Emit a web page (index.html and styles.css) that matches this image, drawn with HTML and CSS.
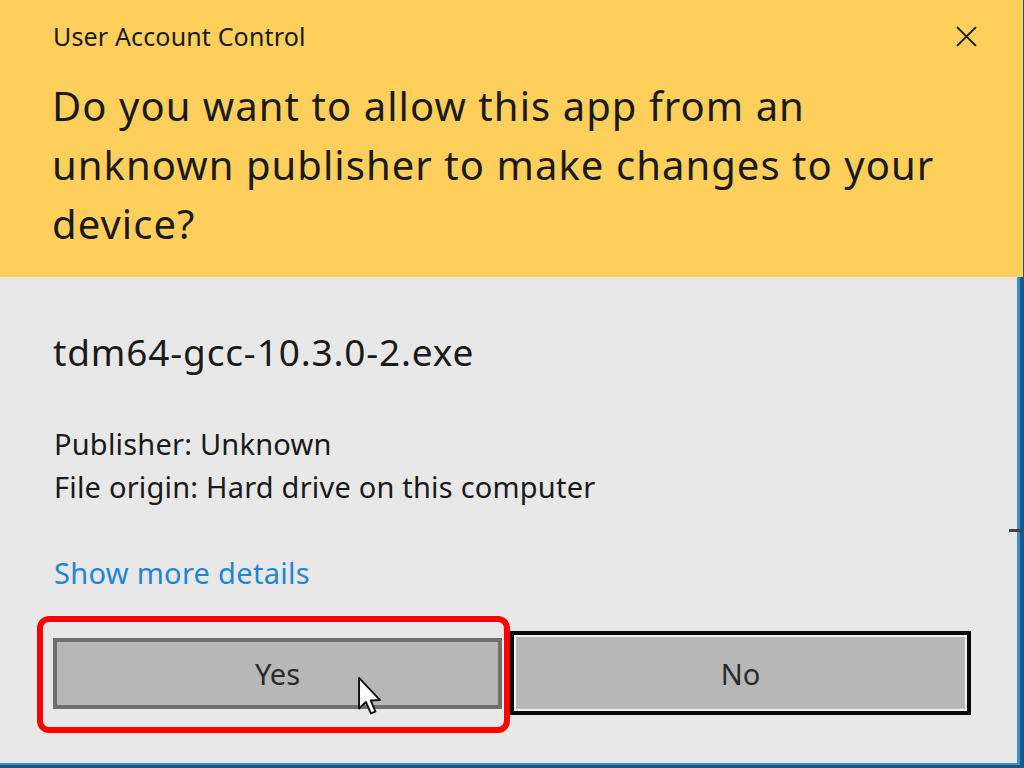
FILE: index.html
```html
<!DOCTYPE html>
<html lang="en">
<head>
<meta charset="utf-8">
<title>User Account Control</title>
<link rel="stylesheet" href="styles.css">
</head>
<body>
<div class="window">
  <header class="banner">
    <div class="titlebar">
      <span class="title">User Account Control</span>
      <svg class="close" viewBox="0 0 20 20" width="21" height="21" aria-hidden="true">
        <path d="M1 1 L19 19 M19 1 L1 19" stroke="#1a1a1a" stroke-width="1.8" fill="none"/>
      </svg>
    </div>
    <h1 class="question">Do you want to allow this app from an unknown publisher to make changes to your device?</h1>
  </header>
  <main class="content">
    <div class="filename">tdm64-gcc-10.3.0-2.exe</div>
    <div class="meta">
      <div>Publisher: Unknown</div>
      <div>File origin: Hard drive on this computer</div>
    </div>
    <a class="details" href="#">Show more details</a>
    <div class="buttons">
      <button class="btn btn-yes">Yes</button>
      <button class="btn btn-no">No</button>
      <div class="highlight"></div>
      <svg class="cursor" viewBox="0 0 14 22" width="27" height="42" aria-hidden="true">
        <path d="M1 1 L1 17 L4.6 13.6 L7.2 19.6 L9.6 18.6 L7.1 12.8 L12 12.6 Z" fill="#ffffff" stroke="#111" stroke-width="1" stroke-linejoin="round"/>
      </svg>
    </div>
    <div class="edge-mark"></div>
  </main>
</div>
</body>
</html>
```
FILE: styles.css
```css
* { box-sizing: border-box; }
html, body { margin: 0; padding: 0; }
body {
  width: 1024px;
  height: 768px;
  overflow: hidden;
  font-family: "Noto Sans", "Open Sans", "DejaVu Sans", sans-serif;
  color: #1a1a1a;
}
.window {
  width: 1024px;
  height: 768px;
  display: flex;
  flex-direction: column;
  background: #e8e8e8;
  border-right: 4px solid #17588c;
  border-bottom: 3px solid #17588c;
  box-shadow: inset -3px -2px 0 #3a8fd2;
  position: relative;
}
.banner {
  height: 277px;
  background: #fecf5b;
  padding: 0 0 0 52px;
  margin-right: -3px;
}
.titlebar {
  height: 72px;
  display: flex;
  align-items: center;
  justify-content: space-between;
  padding-right: 46px;
}
.title {
  font-size: 25px;
  letter-spacing: 0.15px;
  padding-left: 1px;
}
.close { display: block; }
.question {
  margin: 4px 0 0 0;
  max-width: 905px;
  font-weight: 400;
  font-size: 40px;
  letter-spacing: 1.05px;
  line-height: 59px;
  color: #1a1a1a;
}
.content {
  flex: 1;
  padding: 0 0 0 53px;
  position: relative;
}
.filename {
  font-size: 37px;
  letter-spacing: 0.85px;
  margin-top: 53px;
  line-height: 44px;
}
.meta {
  margin-top: 48px;
  font-size: 29px;
  letter-spacing: 0.2px;
  line-height: 43px;
  padding-left: 1px;
}
.details {
  display: inline-block;
  margin-top: 47px;
  font-size: 29px;
  letter-spacing: 0.3px;
  line-height: 36px;
  color: #1e86d6;
  text-decoration: none;
  padding-left: 1px;
}
.buttons {
  position: relative;
  display: flex;
  align-items: center;
  gap: 8px;
  margin-top: 40px;
  height: 84px;
}
.btn {
  font-family: inherit;
  font-size: 29px;
  color: #2a2a2a;
  background: #b7b7b7;
  padding: 0;
  margin: 0;
}
.btn-yes {
  width: 449px;
  height: 71px;
  border: 4px solid #6f6f6f;
}
.btn-no {
  width: 461px;
  height: 84px;
  border: 4px solid #0a0a0a;
  box-shadow: inset 0 0 0 2px #f2f2f2;
}
.highlight {
  position: absolute;
  left: -16px;
  top: -15px;
  width: 473px;
  height: 117px;
  border: 6px solid #ff0000;
  border-radius: 12px;
}
.cursor {
  position: absolute;
  left: 304px;
  top: 45px;
}
.edge-mark {
  position: absolute;
  right: 0;
  top: 252px;
  width: 11px;
  height: 3px;
  background: #444;
}
```
